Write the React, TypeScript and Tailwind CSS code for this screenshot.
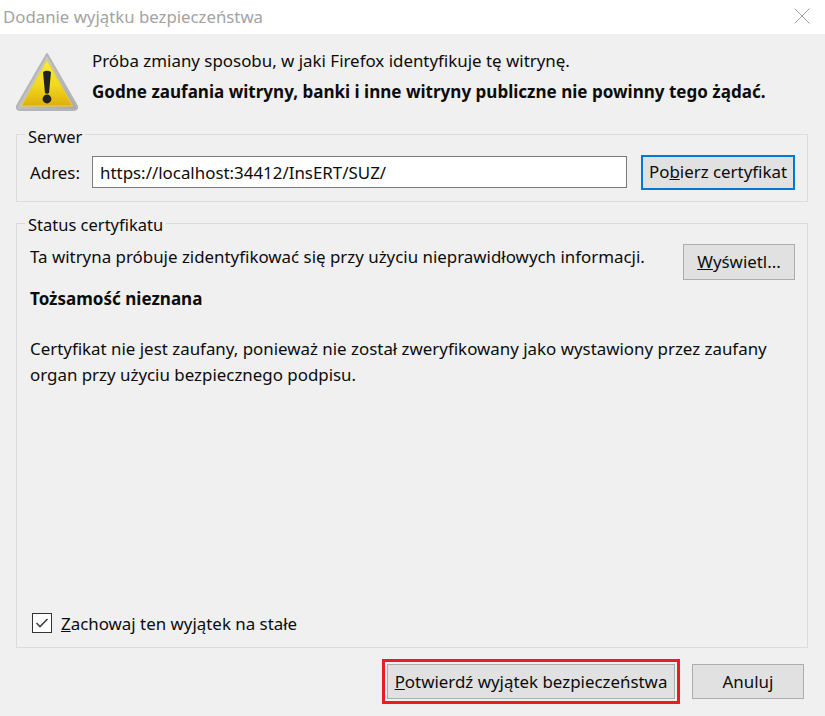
const fontClass = "font-['Noto_Sans',sans-serif]";

const WarningIcon = () => (
  <svg width="66" height="60" viewBox="0 0 66 60" className="shrink-0 -ml-[2px]">
    <defs>
      <linearGradient id="warnFill" x1="0" y1="0" x2="0" y2="1">
        <stop offset="0" stopColor="#f7ee3a" />
        <stop offset="0.55" stopColor="#f1d91e" />
        <stop offset="1" stopColor="#dfae0c" />
      </linearGradient>
      <linearGradient id="warnEdge" x1="0" y1="0" x2="1" y2="1">
        <stop offset="0" stopColor="#d6d6d6" />
        <stop offset="1" stopColor="#a8a8a8" />
      </linearGradient>
    </defs>
    <path d="M33 2 L63 54 Q64 58 60 58 L6 58 Q2 58 3 54 Z" fill="url(#warnEdge)" stroke="#b5b5b5" strokeWidth="2" strokeLinejoin="round" />
    <path d="M33 8 L58.5 54 L7.5 54 Z" fill="url(#warnFill)" stroke="#e6d040" strokeWidth="1" strokeLinejoin="round" />
    <path d="M29 20 Q33 17.500 37 20 L35 41 Q33 42.500 31 41 Z" fill="#222" />
    <circle cx="33" cy="47" r="4.400" fill="#222" />
  </svg>
);

const DialogButton = ({ children, focused, className }: { children: React.ReactNode; focused?: boolean; className: string }) => (
  <button
    className={`bg-[#e1e1e1] text-[#0c0c0c] flex items-center justify-center ${
      focused ? 'border-2 border-[#0078d7]' : 'border border-[#adadad]'
    } ${className}`}
  >
    {children}
  </button>
);

export default function App() {
  return (
    <div className={`w-[825px] h-[716px] flex flex-col bg-[#f0f0f0] text-[16.9px] text-[#0c0c0c] overflow-hidden ${fontClass}`}>
      {/* Title bar */}
      <div className="h-[34px] bg-white flex items-center justify-between pl-[3px] pr-[6px] shrink-0">
        <span className="text-[#a3a3a3] text-[16.8px] leading-[34px]">Dodanie wyjątku bezpieczeństwa</span>
        <svg width="16" height="16" viewBox="0 0 16 16" className="mr-[9px] -mt-[2px]">
          <path d="M0.500 0.500 L15.500 15.500 M15.500 0.500 L0.500 15.500" stroke="#a0a0a0" strokeWidth="1" fill="none" />
        </svg>
      </div>

      <div className="flex-1 flex flex-col pl-[16px] pr-[17px]">
        {/* Warning */}
        <div className="flex h-[100px] pt-[18px]">
          <div className="w-[76px]">
            <WarningIcon />
          </div>
          <div className="leading-[31px] -mt-[7px]">
            <div>Próba zmiany sposobu, w jaki Firefox identyfikuje tę witrynę.</div>
            <div className="font-bold text-[17.05px]">Godne zaufania witryny, banki i inne witryny publiczne nie powinny tego żądać.</div>
          </div>
        </div>

        {/* Serwer */}
        <div className="relative h-[68px] border border-[#dcdcdc] flex items-center pl-[13px] pr-[12px]">
          <span className="absolute -top-[10px] left-[8px] px-[3px] bg-[#f0f0f0] text-[16.5px] leading-[24px]">Serwer</span>
          <span className="w-[62px] mt-[9px]">Adres:</span>
          <div className="w-[535px] h-[32px] mt-[8px] border border-[#7a7a7a] bg-white flex items-center pl-[7px]">
            <span className="mt-[1px]">https://localhost:34412/InsERT/SUZ/</span>
          </div>
          <DialogButton focused className="w-[154px] h-[35px] mt-[8px] ml-[14px]">
            <span>Po<span className="underline">b</span>ierz certyfikat</span>
          </DialogButton>
        </div>

        {/* Status certyfikatu */}
        <div className="relative h-[425px] mt-[21px] border border-[#dcdcdc] pl-[13px] pr-[12px] flex flex-col">
          <span className="absolute -top-[9px] left-[8px] px-[3px] bg-[#f0f0f0] text-[16.5px] leading-[20px]">Status certyfikatu</span>
          <div className="flex justify-between mt-[20px]">
            <span className="leading-[26px]">Ta witryna próbuje zidentyfikować się przy użyciu nieprawidłowych informacji.</span>
            <DialogButton className="w-[112px] h-[36px]">
              <span><span className="underline">W</span>yświetl...</span>
            </DialogButton>
          </div>
          <div className="font-bold text-[17.05px] mt-[6px] leading-[26px]">Tożsamość nieznana</div>
          <div className="mt-[24px] leading-[26px] w-[770px]">
            Certyfikat nie jest zaufany, ponieważ nie został zweryfikowany jako wystawiony przez zaufany organ przy użyciu bezpiecznego podpisu.
          </div>
          <div className="mt-auto mb-[11px] ml-[2px] flex items-center">
            <div className="w-[20px] h-[20px] border border-[#333] bg-white flex items-center justify-center">
              <svg width="14" height="12" viewBox="0 0 14 12">
                <path d="M1.500 6 L5 9.500 L12.500 2" stroke="#444" strokeWidth="1.600" fill="none" />
              </svg>
            </div>
            <span className="ml-[9px]"><span className="underline">Z</span>achowaj ten wyjątek na stałe</span>
          </div>
        </div>

        {/* Actions */}
        <div className="flex justify-end items-center mt-[11px] pr-[4px]">
          <div className="border-[3px] border-[#ed1c24] p-[2px]">
            <DialogButton className="w-[288px] h-[35px]">
              <span><span className="underline">P</span>otwierdź wyjątek bezpieczeństwa</span>
            </DialogButton>
          </div>
          <DialogButton className="w-[112px] h-[35px] ml-[12px]">Anuluj</DialogButton>
        </div>
      </div>
    </div>
  );
}
